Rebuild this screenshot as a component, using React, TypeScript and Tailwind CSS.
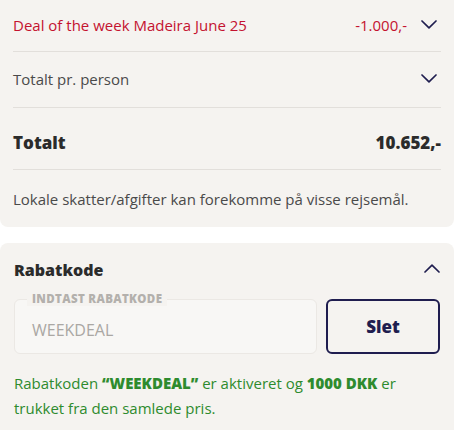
import React from 'react';

function Chevron({ up = false }: { up?: boolean }) {
  return (
    <svg width="16" height="9" viewBox="0 0 16 9" fill="none" className="text-[#1f1d4f]">
      <path
        d={up ? 'M1 8L8 1.2L15 8' : 'M1 1L8 7.8L15 1'}
        stroke="currentColor"
        strokeWidth="1.7"
        strokeLinecap="round"
        strokeLinejoin="round"
      />
    </svg>
  );
}

export default function App() {
  return (
    <div className="w-[454px] h-[430px] bg-white overflow-hidden font-['Open_Sans',sans-serif]">
      {/* Prisoversigt */}
      <div className="bg-[#f5f3f0] rounded-b-lg px-[13px]">
        <div className="flex items-center h-[52px] border-b border-[#e2dfdb] text-[15px] text-[#c4122f]">
          <span className="flex-1">Deal of the week Madeira June 25</span>
          <span className="mr-[14px]">-1.000,-</span>
          <span className="mr-[4px] -mt-[3px]"><Chevron /></span>
        </div>
        <div className="flex items-center h-[56px] border-b border-[#e2dfdb] text-[15px] text-[#4a4a4a]">
          <span className="flex-1">Totalt pr. person</span>
          <span className="mr-[4px] -mt-[3px]"><Chevron /></span>
        </div>
        <div className="flex items-center justify-between h-[62px] pt-[8px] border-b border-[#e2dfdb] text-[17px] font-extrabold text-[#2b2b2b]">
          <span>Totalt</span>
          <span>10.652,-</span>
        </div>
        <p className="h-[57px] pt-[2px] flex items-center text-[15px] text-[#4a4a4a]">
          Lokale skatter/afgifter kan forekomme på visse rejsemål.
        </p>
      </div>

      {/* Rabatkode */}
      <div className="mt-[16px] bg-[#f5f3f0] rounded-t-lg px-[14px] pt-[16px] pb-4">
        <div className="flex items-center justify-between h-[22px]">
          <h3 className="text-[16px] font-extrabold text-[#2b2b2b]">Rabatkode</h3>
          <span className="-mt-[3px]"><Chevron up /></span>
        </div>
        <div className="flex gap-[9px] mt-[18px]">
          <div className="relative flex-1 h-[55px] rounded-md border border-[#ebe8e4] bg-[#f8f7f5] flex items-center px-[17px]">
            <span className="absolute -top-[8px] left-[12px] px-[5px] bg-[#f5f3f0] text-[11.5px] font-extrabold tracking-[0.03em] text-[#b3b0ac] leading-[14px]">
              INDTAST RABATKODE
            </span>
            <span className="text-[16px] text-[#aaa7a3] mt-[7px]">WEEKDEAL</span>
          </div>
          <button className="w-[114px] h-[55px] rounded-md border-2 border-[#1f1d4f] text-[#1f1d4f] text-[17px] font-extrabold">
            Slet
          </button>
        </div>
        <p className="mt-[17px] text-[15px] leading-[25px] text-[#2e8b2e]">
          Rabatkoden <b className="font-extrabold">“WEEKDEAL”</b> er aktiveret og{' '}
          <b className="font-extrabold">1000 DKK</b> er trukket fra den samlede pris.
        </p>
      </div>
    </div>
  );
}
